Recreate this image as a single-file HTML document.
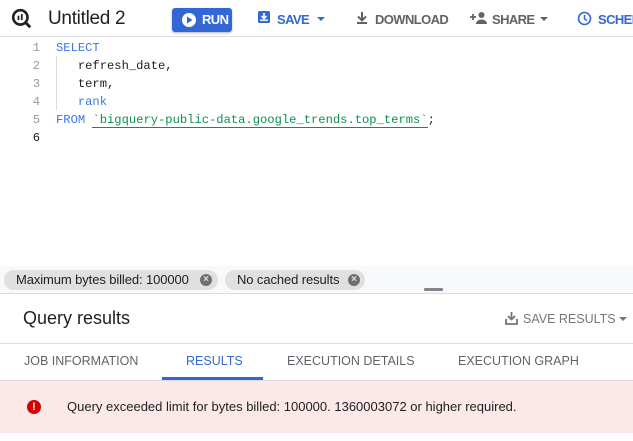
<!DOCTYPE html>
<html><head><style>
*{margin:0;padding:0;box-sizing:border-box}
body{width:633px;height:441px;overflow:hidden;background:#fff;font-family:"Liberation Sans",sans-serif;position:relative}
.a{position:absolute;white-space:nowrap}
.mono{font-family:"Liberation Mono",monospace;font-size:12.15px}
.tb{color:#5f6368;font-size:13px;font-weight:bold;letter-spacing:-.6px}
.t{font-size:12.5px;color:#5f6368}
</style></head><body>
<!-- toolbar -->
<div class="a" style="left:0;top:0;width:633px;height:37px;border-bottom:1px solid #dadce0"></div>
<svg class="a" style="left:11px;top:8px" width="22" height="22" viewBox="0 0 20 20"><circle cx="8.5" cy="8.5" r="6.5" fill="none" stroke="#202124" stroke-width="2.4"/><line x1="13" y1="13" x2="17.5" y2="17.5" stroke="#202124" stroke-width="2.6"/><rect x="6" y="7" width="1.6" height="4" fill="#202124"/><rect x="9" y="5.5" width="1.6" height="5.5" fill="#202124"/></svg>
<div class="a" style="left:48px;top:8px;font-size:19px;color:#202124;letter-spacing:-.3px">Untitled 2</div>
<div class="a" style="left:172px;top:8px;width:60px;height:24px;background:#3367d6;border-radius:3px;box-shadow:0 1px 2px rgba(0,0,0,.3)"></div>
<svg class="a" style="left:181px;top:12px" width="16" height="16"><circle cx="8" cy="8" r="7" fill="#fff"/><path d="M6 4.5L11.5 8 6 11.5z" fill="#3367d6"/></svg>
<div class="a tb" style="left:202px;top:12px;color:#fff">RUN</div>
<svg class="a" style="left:257px;top:10px" width="14" height="14"><rect x="1" y="1" width="12" height="12" rx="1.5" fill="#3367d6"/><path d="M7 3v5M4.5 6L7 8.5 9.5 6" stroke="#fff" stroke-width="1.6" fill="none"/><rect x="3" y="9.5" width="8" height="1.4" fill="#fff"/></svg>
<div class="a tb" style="left:277px;top:12px;color:#3367d6">SAVE</div>
<div class="a" style="left:317px;top:17px;border:4px solid transparent;border-top:4px solid #3367d6;border-bottom:0"></div>
<svg class="a" style="left:356px;top:11px" width="12" height="14"><path d="M6 1v8M2 5.5L6 9.5 10 5.5" stroke="#5f6368" stroke-width="2" fill="none"/><rect x="1" y="11" width="10" height="2" fill="#5f6368"/></svg>
<div class="a tb" style="left:375px;top:12px">DOWNLOAD</div>
<svg class="a" style="left:470px;top:11px" width="18" height="14"><path d="M3 3v6M0 6h6" stroke="#5f6368" stroke-width="1.8"/><circle cx="11.5" cy="4" r="3" fill="#5f6368"/><path d="M6 13c0-3 3-4.5 5.5-4.5S17 10 17 13z" fill="#5f6368"/></svg>
<div class="a tb" style="left:492px;top:12px">SHARE</div>
<div class="a" style="left:540px;top:17px;border:4px solid transparent;border-top:4px solid #5f6368;border-bottom:0"></div>
<svg class="a" style="left:577px;top:11px" width="15" height="15"><circle cx="7.5" cy="7.5" r="6" fill="none" stroke="#3367d6" stroke-width="1.6"/><path d="M7.5 4v4l2.5 1.5" stroke="#3367d6" stroke-width="1.5" fill="none"/></svg>
<div class="a" style="left:598px;top:10px;width:35px;height:20px;overflow:hidden"><div class="a tb" style="left:0;top:2px;color:#3367d6">SCHEDULE</div></div>
<!-- editor -->
<div class="a" style="left:56px;top:56px;width:1px;height:54px;background:#ddd"></div>
<div class="a mono" style="left:30px;top:39px;line-height:18px;color:#999;text-align:right;width:10px">1<br>2<br>3<br>4<br>5<br><span style="color:#202124">6</span></div>
<div class="a mono" style="left:56px;top:39px;line-height:18px;color:#202124">
<span style="color:#3b78e7">SELECT</span><br>&nbsp;&nbsp;&nbsp;refresh_date,<br>&nbsp;&nbsp;&nbsp;term,<br>&nbsp;&nbsp;&nbsp;<span style="color:#3b78e7">rank</span><br><span style="color:#3b78e7">FROM</span> <span style="color:#0d904f;border-bottom:1px solid #0d904f">`bigquery-public-data.google_trends.top_terms`</span>;</div>
<!-- chips -->
<div class="a" style="left:0;top:266px;width:633px;height:28px;background:#f8f9fa;border-bottom:1px solid #dadce0"></div>
<div class="a" style="left:4px;top:270px;width:214px;height:20px;background:#e0e0e0;border-radius:10px"></div>
<div class="a" style="left:16px;top:272px;font-size:13px;color:#202124;letter-spacing:-.1px">Maximum bytes billed: 100000</div>
<div class="a" style="left:200px;top:274px;width:12px;height:12px;border-radius:50%;background:#6f6f6f;color:#e0e0e0;font-size:10px;line-height:12px;text-align:center;font-weight:bold">×</div>
<div class="a" style="left:225px;top:270px;width:140px;height:20px;background:#e0e0e0;border-radius:10px"></div>
<div class="a" style="left:237px;top:272px;font-size:13px;color:#202124;letter-spacing:-.1px">No cached results</div>
<div class="a" style="left:348px;top:274px;width:12px;height:12px;border-radius:50%;background:#6f6f6f;color:#e0e0e0;font-size:10px;line-height:12px;text-align:center;font-weight:bold">×</div>
<div class="a" style="left:424px;top:288px;width:19px;height:3px;background:#80868b;border-radius:1px"></div>
<!-- results header -->
<div class="a" style="left:23px;top:308px;font-size:18px;color:#202124">Query results</div>
<svg class="a" style="left:505px;top:311px" width="13" height="14"><path d="M6.5 1v7M3 5l3.5 3.5L10 5" stroke="#757575" stroke-width="1.8" fill="none"/><path d="M1 8v5h11V8" stroke="#757575" stroke-width="1.8" fill="none"/></svg>
<div class="a" style="left:523px;top:312px;font-size:12.5px;color:#757575">SAVE RESULTS</div>
<div class="a" style="left:619px;top:317px;border:4px solid transparent;border-top:4px solid #757575;border-bottom:0"></div>
<div class="a" style="left:0;top:343px;width:633px;height:1px;background:#dadce0"></div>
<!-- tabs -->
<div class="a t" style="left:24px;top:354px">JOB INFORMATION</div>
<div class="a t" style="left:186px;top:354px;color:#3367d6">RESULTS</div>
<div class="a" style="left:162px;top:377px;width:101px;height:3px;background:#3367d6"></div>
<div class="a t" style="left:287px;top:354px">EXECUTION DETAILS</div>
<div class="a t" style="left:458px;top:354px">EXECUTION GRAPH</div>
<div class="a" style="left:0;top:380px;width:633px;height:1px;background:#dadce0"></div>
<!-- error -->
<div class="a" style="left:0;top:381px;width:633px;height:52px;background:#fce8e6"></div>
<div class="a" style="left:27px;top:400px;width:14px;height:14px;border-radius:50%;background:#d50000;color:#fff;font-size:11px;font-weight:bold;line-height:14px;text-align:center">!</div>
<div class="a" style="left:67px;top:399px;font-size:13px;color:#202124">Query exceeded limit for bytes billed: 100000. 1360003072 or higher required.</div>
</body></html>
